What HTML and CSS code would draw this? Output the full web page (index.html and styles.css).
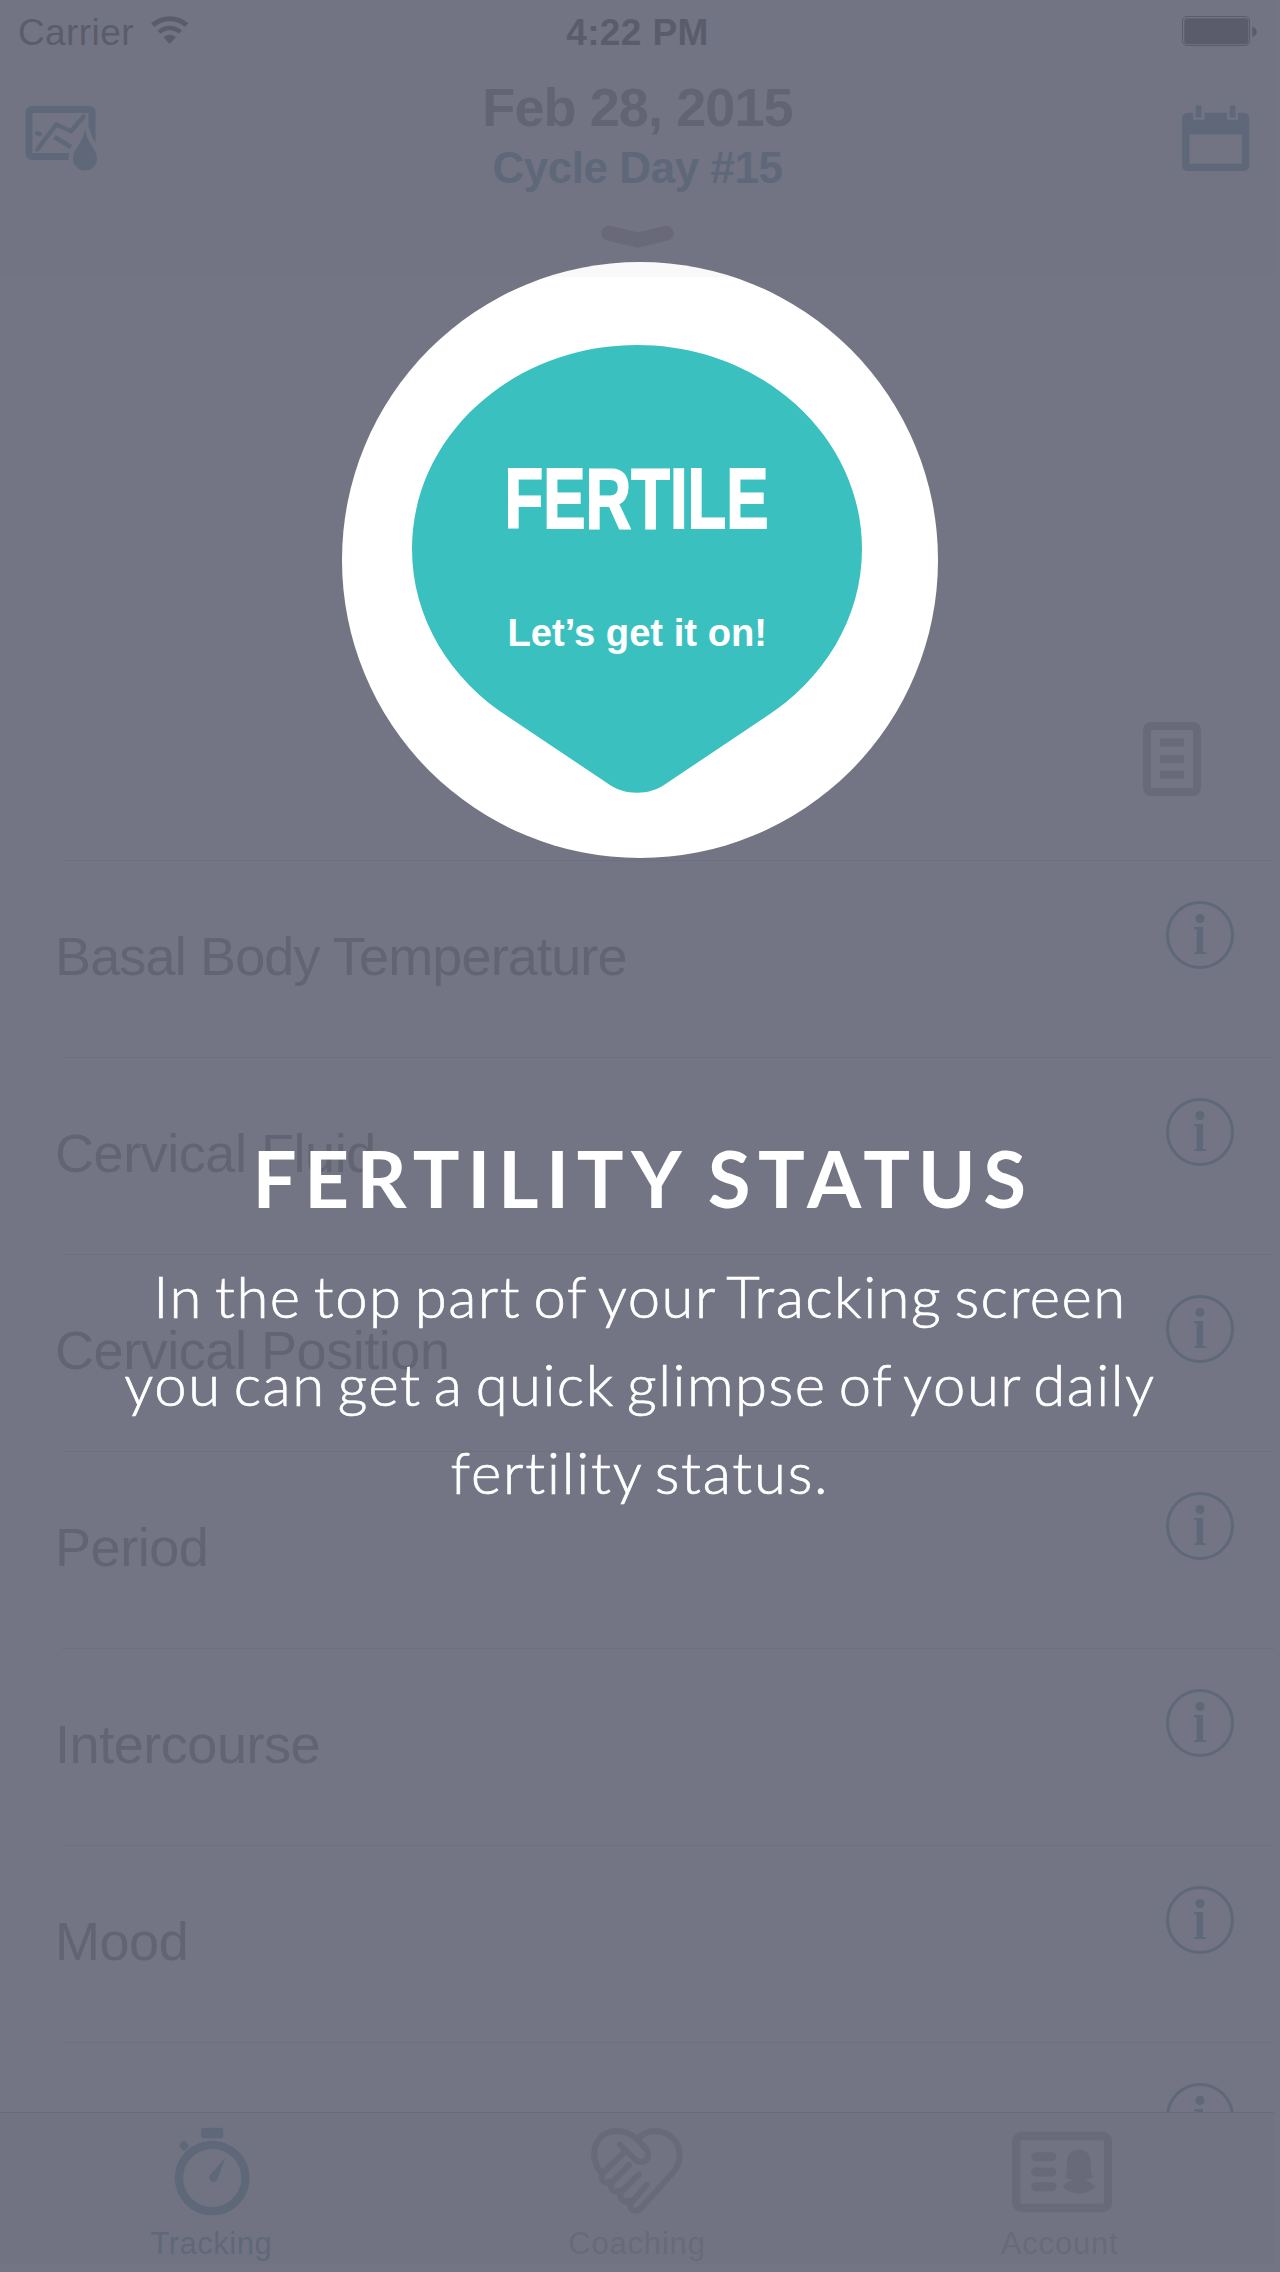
FILE: index.html
```html
<!DOCTYPE html>
<html lang="en">
<head>
<meta charset="utf-8">
<title>Fertility Status</title>
<link rel="stylesheet" href="styles.css">
</head>
<body>
<svg class="symbols" aria-hidden="true">
  <symbol id="info" viewBox="0 0 68 68">
    <circle cx="34" cy="34" r="32.5" fill="none" stroke="currentColor" stroke-width="3"/>
    <circle cx="34" cy="17.5" r="4.5" fill="currentColor"/>
    <path fill="currentColor" d="M28 26H37V51L40.300 51.500V53H28V51.500L30.700 51V28.500L28 28Z"/>
  </symbol>
</svg>
<div class="app">
  <header class="header">
    <div class="status">
      <div class="carrier">
        <span>Carrier</span>
        <svg class="wifi" viewBox="150 15 40 30" width="40" height="30">
          <path d="M152.800 25.200A25.300 25.300 0 0 1 186.600 25.200" fill="none" stroke="currentColor" stroke-width="5"/>
          <path d="M159 32.100A16 16 0 0 1 180.400 32.100" fill="none" stroke="currentColor" stroke-width="4.500"/>
          <path d="M163.500 37.200A9.300 9.300 0 0 1 175.900 37.200L169.700 44Z" fill="currentColor"/>
        </svg>
      </div>
      <div class="clock">4:22 PM</div>
      <svg class="battery" viewBox="1182 16 75 30" width="75" height="30">
        <rect x="1182.500" y="16.500" width="67" height="29" rx="4.500" fill="none" stroke="currentColor"/>
        <rect x="1184.300" y="18.300" width="64" height="26" rx="3" fill="currentColor"/>
        <path d="M1252.300 26.800Q1256.700 28 1256.700 31.800T1252.300 37Z" fill="currentColor"/>
      </svg>
    </div>
    <div class="nav">
      <svg class="nav-icon" viewBox="25 104 74 68" width="74" height="68">
        <rect x="29" y="109.400" width="63" height="47" rx="3" fill="none" stroke="currentColor" stroke-width="7"/>
        <g fill="none" stroke="currentColor" stroke-width="4.500" stroke-linecap="round" stroke-linejoin="round">
          <path d="M37.300 149.500L56.200 124.500L71 131.300L83.700 116.500"/>
          <path d="M37 133.300L39.800 134"/>
        </g>
        <path d="M54.500 137L71 147" fill="none" stroke="currentColor" stroke-width="4.500"/>
        <path class="drop-gap" d="M85 129C87 143 97 149 97 158.500A12 12 0 0 1 73 158.500C73 149 83 143 85 129Z"/>
        <path d="M85 129C87 143 97 149 97 158.500A12 12 0 0 1 73 158.500C73 149 83 143 85 129Z" fill="currentColor"/>
      </svg>
      <div class="heading">
        <div class="date">Feb 28, 2015</div>
        <div class="cycle">Cycle Day #15</div>
      </div>
      <svg class="nav-icon" viewBox="1182 104 68 68" width="68" height="68">
        <path fill="currentColor" fill-rule="evenodd" d="M1188 112.700H1193V119.700H1204.500V112.700H1227V119.700H1238V112.700H1243Q1249.300 112.700 1249.300 119V165Q1249.300 171 1243 171H1188Q1182 171 1182 165V119Q1182 112.700 1188 112.700ZM1189.500 134.500V163.700H1242V134.500Z"/>
        <path fill="currentColor" d="M1195.700 105.500H1201.500V117.500H1195.700ZM1229.700 105.500H1235.500V117.500H1229.700Z"/>
      </svg>
    </div>
    <svg class="chevron" viewBox="600 224 75 25" width="75" height="25">
      <path d="M608.800 233.300L637.500 240L666.200 233.300" fill="none" stroke="currentColor" stroke-width="15" stroke-linecap="round"/>
    </svg>
  </header>

  <main class="main">
    <div class="hero">
      <svg viewBox="0 0 58 74" width="58" height="74">
        <rect x="4" y="4" width="50" height="66" rx="4" fill="none" stroke="currentColor" stroke-width="8"/>
        <path d="M17 20.500H41M17 37H41M17 52.700H41" fill="none" stroke="currentColor" stroke-width="8"/>
      </svg>
    </div>
    <ul class="list">
      <li class="row row-long"><span>Basal Body Temperature</span><svg class="info"><use href="#info"/></svg></li>
      <li class="row"><span>Cervical Fluid</span><svg class="info"><use href="#info"/></svg></li>
      <li class="row"><span>Cervical Position</span><svg class="info"><use href="#info"/></svg></li>
      <li class="row"><span>Period</span><svg class="info"><use href="#info"/></svg></li>
      <li class="row"><span>Intercourse</span><svg class="info"><use href="#info"/></svg></li>
      <li class="row"><span>Mood</span><svg class="info"><use href="#info"/></svg></li>
      <li class="row"><span></span><svg class="info"><use href="#info"/></svg></li>
    </ul>
  </main>

  <nav class="tabs">
    <div class="tab tab-active">
      <svg viewBox="162 2122 100 96" width="100" height="96">
        <circle cx="212.200" cy="2178" r="33.200" fill="none" stroke="currentColor" stroke-width="8.300"/>
        <rect x="201" y="2127.700" width="22.300" height="10.500" rx="3" fill="currentColor"/>
        <rect x="180.200" y="2141.500" width="7.600" height="8.400" rx="2" fill="currentColor" transform="rotate(-42 184 2145.700)"/>
        <path fill="currentColor" d="M225.500 2157.500L217.300 2179.500A4.300 4.300 0 1 1 209.700 2175.500Z"/>
      </svg>
      <span>Tracking</span>
    </div>
    <div class="tab">
      <svg viewBox="201 126 300 288" width="100" height="96">
        <g fill="none" stroke="currentColor" stroke-width="18" stroke-linecap="round" stroke-linejoin="round">
          <path d="M245 279C202 232 222 153 293 153C320 153 336 164 350 177L377 205C398 229 373 259 346 240L300 194"/>
          <path d="M352 178C370 159 390 153 406 153C448 154 479 186 479 225C479 247 470 266 457 280L361 386C348 399 329 392 330 373L380 314"/>
          <path d="M312 217L247 281C240 302 254 314 270 304"/>
          <path d="M327 255L275 307C268 328 284 341 299 331"/>
          <path d="M356 284L303 336C297 358 313 371 329 361"/>
        </g>
      </svg>
      <span>Coaching</span>
    </div>
    <div class="tab">
      <svg viewBox="155 186 300 288" width="100" height="96">
        <rect x="167.500" y="228" width="276" height="216" rx="18" fill="none" stroke="currentColor" stroke-width="25"/>
        <path d="M226 290H275M226 336H275M226 380H275" stroke="currentColor" stroke-width="27" stroke-linecap="round"/>
        <path fill="currentColor" d="M320 304C320 257 391 257 391 304L393 343L400 351Q385 359 374 361Q395 368 405 380Q356 422 306 380Q318 366 338 361Q325 360 314 352L319 340Z"/>
      </svg>
      <span>Account</span>
    </div>
  </nav>
</div>

<section class="coach">
  <div class="spotlight">
    <svg viewBox="342 262 596 596" width="596" height="596">
      <path fill="#3bc0c0" d="M637 345C761 345 862 436 862 549C862 618 824 680 764 718L667 783C650 796 624 796 607 783L510 718C450 680 412 618 412 549C412 436 513 345 637 345Z"/>
      <text class="badge-title" x="504.500" y="528.400" textLength="264" lengthAdjust="spacingAndGlyphs">FERTILE</text>
      <text class="badge-sub" x="507.500" y="645.600" textLength="259.500" lengthAdjust="spacingAndGlyphs">Let’s get it on!</text>
    </svg>
  </div>
  <h1 class="coach-title">FERTILITY STATUS</h1>
  <p class="coach-text">In the top part of your Tracking screen<br>you can get a quick glimpse of your daily<br><span class="last-line">fertility status.</span></p>
</section>
</body>
</html>
```
FILE: styles.css
```css
* { box-sizing: border-box; margin: 0; padding: 0; }

body {
  width: 1280px;
  height: 2272px;
  position: relative;
  overflow: hidden;
  background: #737584;
  font-family: "Liberation Sans", Arial, sans-serif;
}

svg { display: block; flex: none; }
.symbols { position: absolute; width: 0; height: 0; }

.app {
  width: 1274px;
  height: 2264px;
  display: flex;
  flex-direction: column;
}

.header {
  height: 277px;
  flex: none;
  background: #727483;
  color: #5e6879;
}

.status {
  height: 64px;
  padding: 0 17px 0 18px;
  display: grid;
  grid-template-columns: 1fr auto 1fr;
  color: #5b5c6b;
  font-size: 37px;
  line-height: 66px;
}
.carrier { display: flex; gap: 16px; letter-spacing: 0.4px; }
.wifi { margin-top: 15px; }
.clock { font-weight: bold; letter-spacing: 0.4px; }
.battery { justify-self: end; margin-top: 16px; }

.nav {
  height: 160px;
  padding: 0 24px 0 25px;
  display: grid;
  grid-template-columns: 1fr auto 1fr;
}
.nav-icon { margin-top: 40px; }
.nav-icon:last-child { justify-self: end; }
.drop-gap { fill: #727483; stroke: #727483; stroke-width: 9; }
.heading { text-align: center; font-weight: bold; padding-top: 12px; }
.date { color: #636473; font-size: 54px; line-height: 62px; letter-spacing: -0.9px; }
.cycle { font-size: 44px; line-height: 60px; letter-spacing: -0.45px; }
.chevron { margin: 0 auto; color: #69697a; }

.main { height: 1835px; flex: none; overflow: hidden; }
.hero {
  height: 583px;
  padding: 445px 73px 0 0;
  display: flex;
  justify-content: flex-end;
  color: #696a79;
}
.list { list-style: none; }
.row {
  height: 197px;
  margin-left: 62px;
  padding: 40px 40px 0 0;
  display: flex;
  justify-content: space-between;
  align-items: flex-start;
  border-top: 1px solid #6d6f7e;
  color: #636473;
  font-size: 54px;
  line-height: 62px;
  letter-spacing: -0.45px;
}
.row-long { letter-spacing: -0.85px; }
.row span { margin: 24px 0 0 -7px; }
.info { width: 68px; height: 68px; color: #5e6879; }

.tabs {
  height: 152px;
  display: grid;
  grid-template-columns: repeat(3, 1fr);
  background: #727382;
  border-top: 1px solid #696b7a;
}
.tab {
  display: flex;
  flex-direction: column;
  align-items: center;
  padding-top: 9px;
  color: #696a79;
  font-size: 31px;
  line-height: 36px;
  letter-spacing: 0.8px;
}
.tab span { margin-top: 8px; }
.tab:last-child span { padding-right: 4px; }
.tab-active { color: #5e6879; letter-spacing: 0.5px; }
.tab-active span { padding-right: 2px; }

.coach {
  position: absolute;
  inset: 0;
  padding-top: 262px;
  display: flex;
  flex-direction: column;
  align-items: center;
  color: #fff;
  font-family: Lato, sans-serif;
  text-align: center;
}
.spotlight {
  width: 596px;
  height: 596px;
  border-radius: 50%;
  overflow: hidden;
  background: linear-gradient(#f9f9f9 15px, #fff 15px);
}
.badge-title, .badge-sub { fill: #fff; font-family: "Liberation Sans", Arial, sans-serif; font-weight: bold; }
.badge-title { font-size: 85px; stroke: #fff; stroke-width: 2px; }
.badge-sub { font-size: 39px; }
.coach-title {
  margin-top: 272px;
  padding-left: 6px;
  font-size: 78px;
  font-weight: 700;
  line-height: 96px;
  letter-spacing: 7.6px;
  word-spacing: -5px;
}
.coach-text {
  margin-top: 26px;
  font-size: 58px;
  font-weight: 300;
  line-height: 88px;
  letter-spacing: 1.5px;
  word-spacing: -5px;
  white-space: nowrap;
  -webkit-text-stroke: 0.7px #fff;
}
.last-line { letter-spacing: 1.8px; }
```
